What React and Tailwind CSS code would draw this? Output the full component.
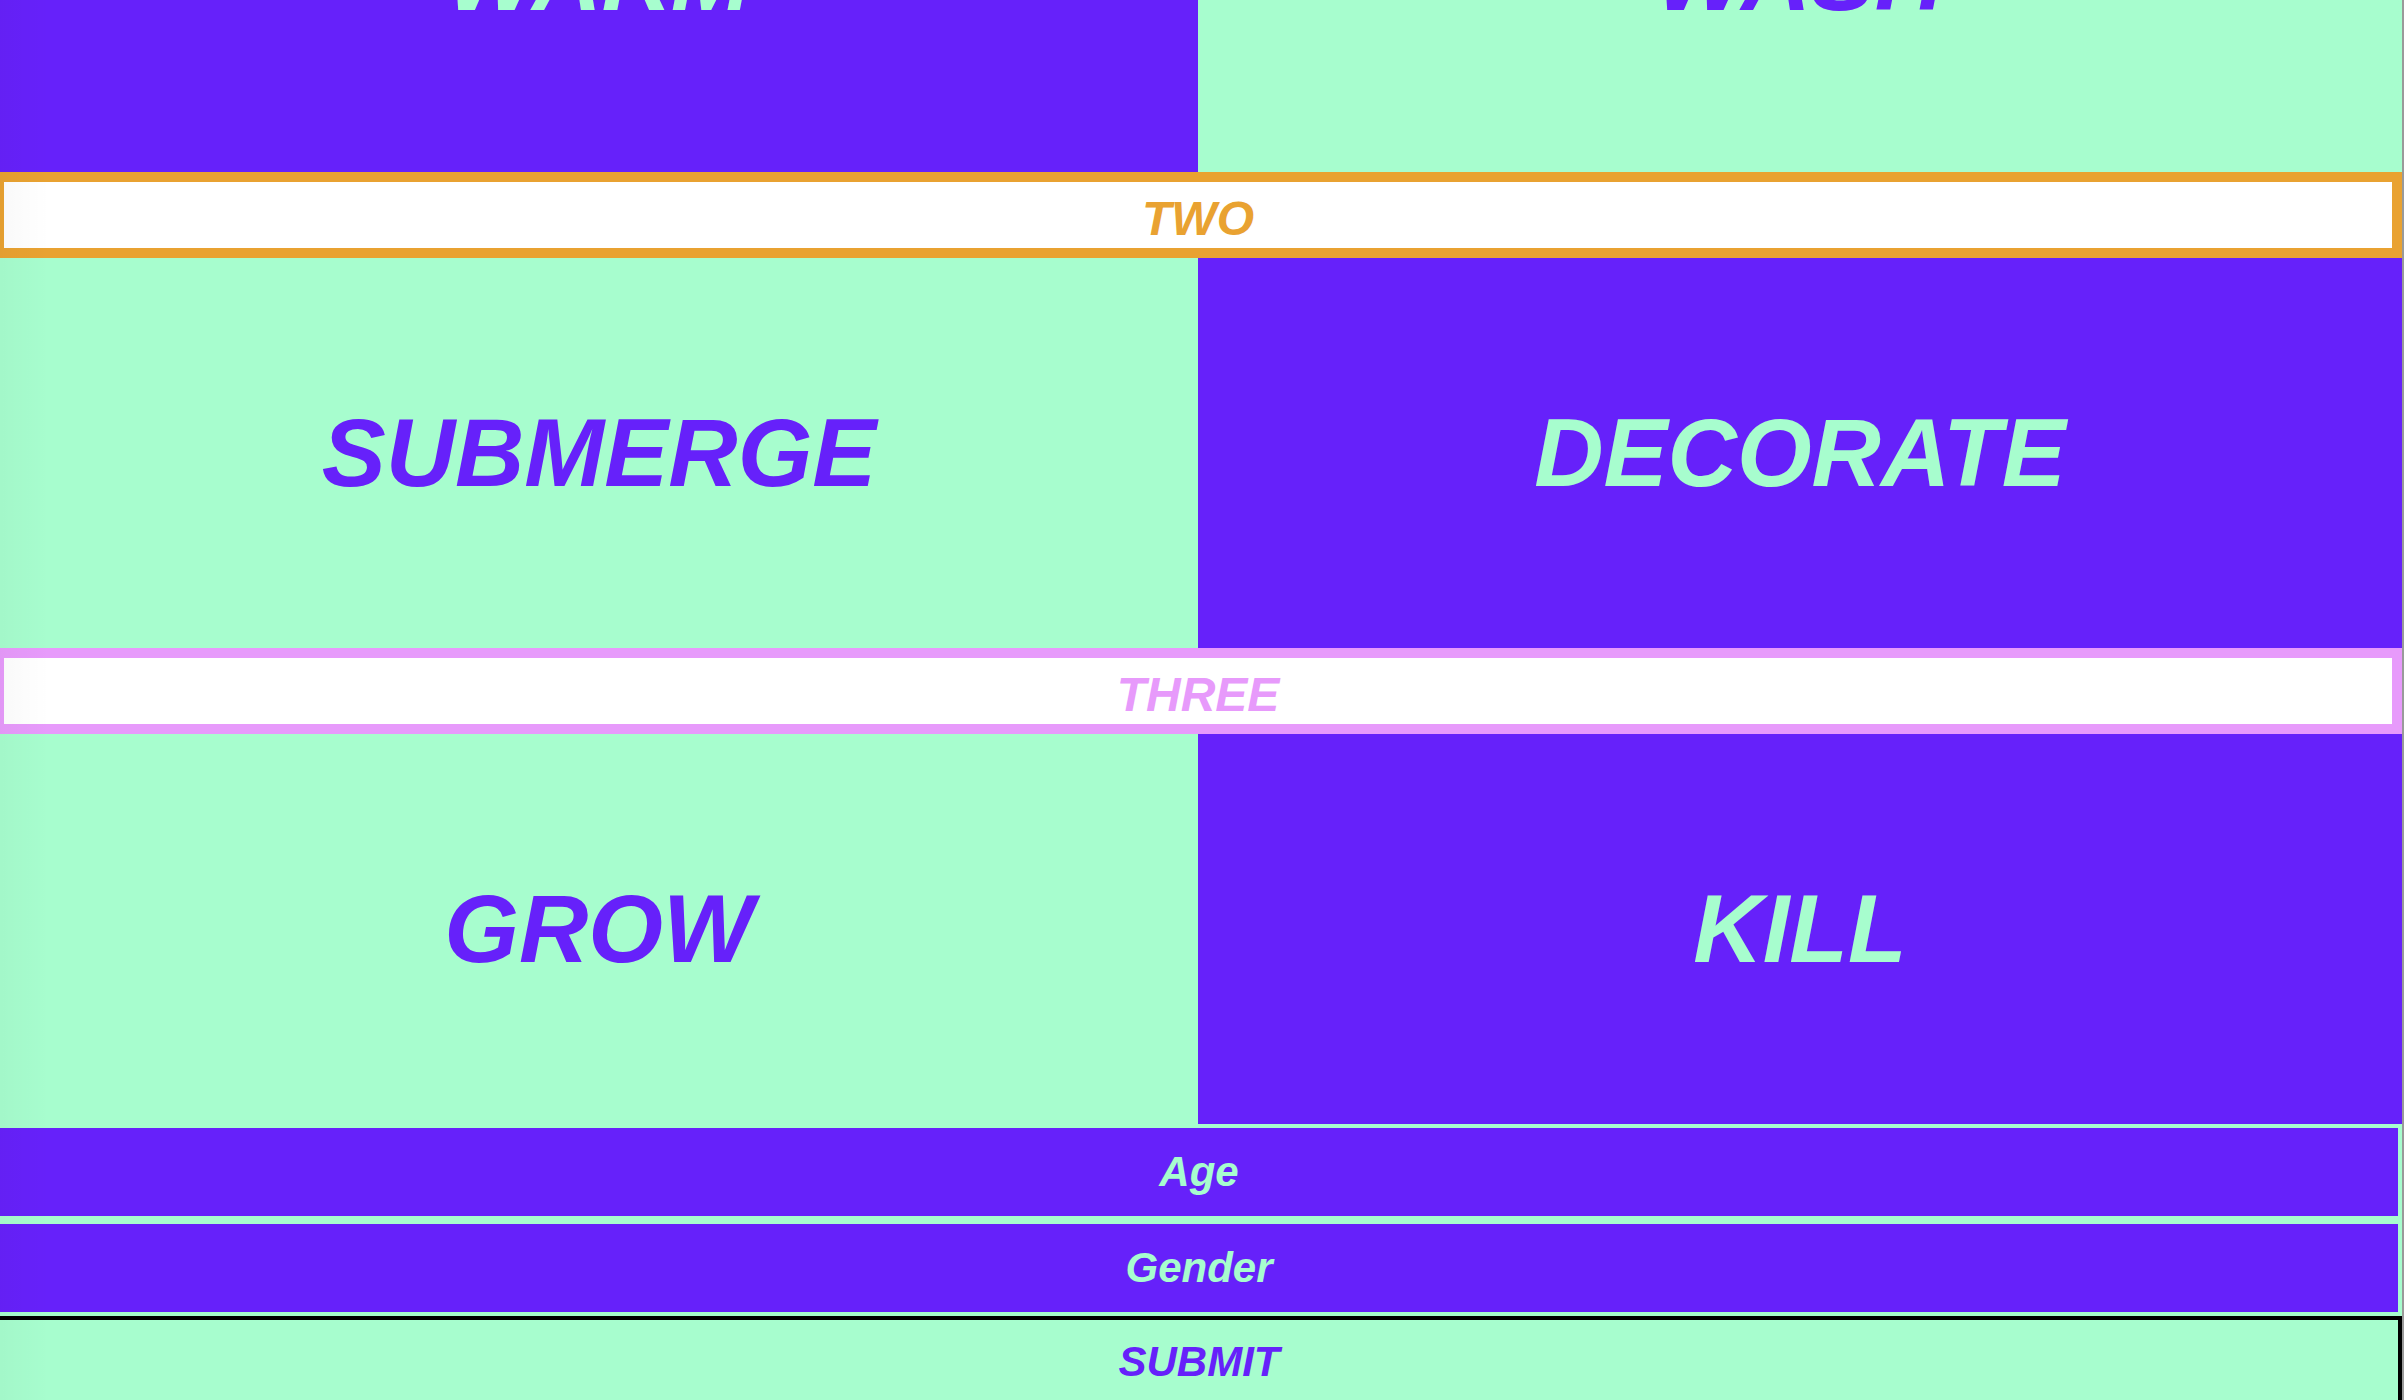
const PURPLE = 'bg-[#6621fa]';
const GREEN = 'bg-[#a7fdce]';

const rows = [
  { left: 'WARM', right: 'WASH', flip: false },
  { band: 'TWO', tone: 'orange' },
  { left: 'SUBMERGE', right: 'DECORATE', flip: true },
  { band: 'THREE', tone: 'violet' },
  { left: 'GROW', right: 'KILL', flip: true },
];

function Cell({ word, dark, wide }) {
  return (
    <div
      className={`flex h-[390px] items-center justify-center ${wide ? 'w-[1198px]' : 'flex-1'} ${
        dark ? 'bg-[#6621fa] text-[#a7fdce]' : 'bg-[#a7fdce] text-[#6621fa]'
      }`}
    >
      <span className="text-[96px] font-bold italic leading-none">{word}</span>
    </div>
  );
}

function Band({ label, tone }) {
  const cls =
    tone === 'orange'
      ? 'border-[#e9a231] text-[#e9a231]'
      : 'border-[#e79afb] text-[#e79afb]';
  return (
    <div
      className={`flex h-[86px] items-center justify-center border-y-[10px] border-l-[4px] border-r-[10px] bg-white pt-[8px] ${cls}`}
    >
      <span className="text-[48px] font-bold italic leading-none">{label}</span>
    </div>
  );
}

export default function App() {
  return (
    <div
      className="relative h-[1400px] w-[2404px] overflow-hidden bg-[#a7fdce] border-r-2 border-[#9a9a9a]"
      style={{ fontFamily: '"Liberation Sans", Arial, sans-serif' }}
    >
      <div className="-mt-[218px] flex flex-col">
        {rows.map((r, i) =>
          r.band ? (
            <Band key={i} label={r.band} tone={r.tone} />
          ) : (
            <div key={i} className="flex">
              <Cell word={r.left} dark={!r.flip} wide />
              <Cell word={r.right} dark={r.flip} />
            </div>
          )
        )}

        <div className="mt-[4px] flex w-[2398px] flex-col gap-[8px]">
          <div className={`flex h-[88px] items-center justify-center ${PURPLE} text-[#a7fdce]`}>
            <span className="text-[42px] font-bold italic leading-none">Age</span>
          </div>
          <div className={`flex h-[88px] items-center justify-center ${PURPLE} text-[#a7fdce]`}>
            <span className="text-[42px] font-bold italic leading-none">Gender</span>
          </div>
        </div>

        <div
          className={`mt-[4px] flex h-[88px] w-[2402px] items-center justify-center border-t-[4px] border-r-[4px] border-black ${GREEN} text-[#6621fa]`}
        >
          <span className="text-[42px] font-bold italic leading-none">SUBMIT</span>
        </div>
      </div>

      {/* faint shade along the left edge */}
      <div className="pointer-events-none absolute inset-y-0 left-0 w-[50px] bg-gradient-to-r from-black/[0.025] to-transparent" />
    </div>
  );
}
